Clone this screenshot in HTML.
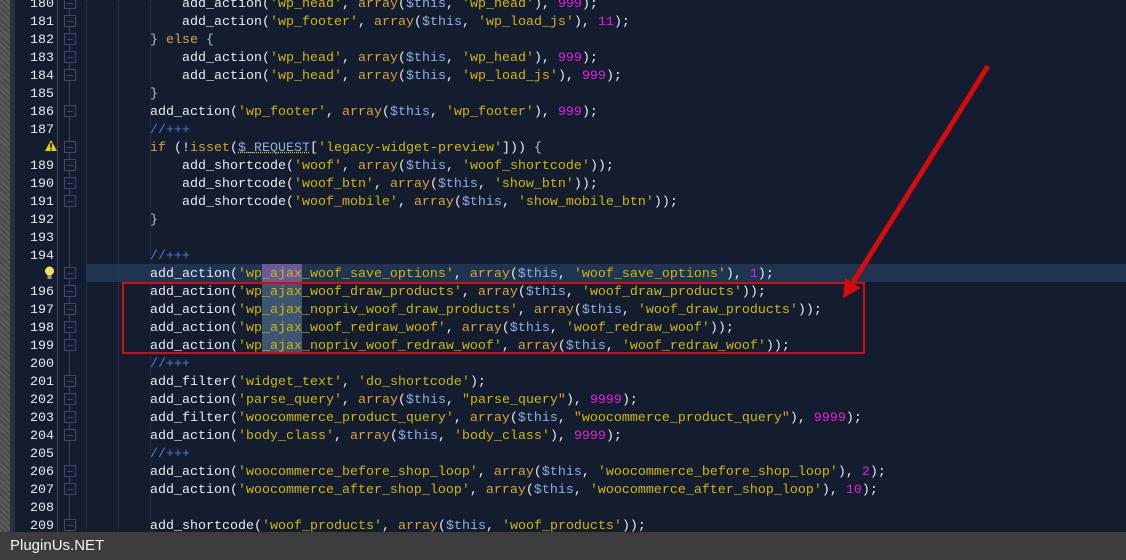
<!DOCTYPE html>
<html><head><meta charset="utf-8"><style>
html,body{margin:0;padding:0}
body{width:1126px;height:560px;overflow:hidden;background:#131d2f;position:relative;font-family:"Liberation Mono",monospace}
.strip{position:absolute;left:0;top:0;width:10px;height:532px;background:repeating-linear-gradient(45deg,#5c5c5c 0 2px,#4a4a4a 2px 4px)}
.strip2{position:absolute;left:10px;top:0;width:5px;height:532px;background:#2a2f3a}
.sep{position:absolute;left:57px;top:0;width:1px;height:532px;background:#3a4558}
.vl{position:absolute;left:69px;top:0;width:1px;height:532px;background:#34435e}
.guide{position:absolute;top:0;height:532px;width:0;border-left:1px dotted #2c3a52}
.cur{position:absolute;left:86px;top:264px;width:1040px;height:18px;background:#1e3450}
.sel{position:absolute;left:262px;width:40px;height:18px;background:#3d5570}
.box{position:absolute;left:122px;top:282px;width:739px;height:68px;border:2px solid #d40c0c}
.nums{position:absolute;left:0;top:-4px;width:54px;text-align:right;color:#e8ecf2;font-size:13.33px;line-height:18px;white-space:pre}
.fold{position:absolute;left:64px;width:10px;height:10px;border:1px solid #3b4b66;background:#131d2f}
.fold:after{content:"";position:absolute;left:2px;top:5px;width:6px;height:1px;background:#3b4b66}
.code{position:absolute;left:86px;top:-4px;color:#e8ecf2;font-size:13.33px;line-height:18px;white-space:pre}
.s{color:#d0b800}.k{color:#dca232}.n{color:#e81ee0}.v{color:#8fb0e0}.c{color:#4d7fd8}.b{color:#a8c0e0}
.foot{position:absolute;left:0;top:532px;width:1126px;height:28px;background:#3c3c3c;color:#f2f2f2;font-family:"Liberation Sans",sans-serif;font-size:15px;line-height:28px;padding-left:10px;box-sizing:border-box}
</style></head><body>
<div class="strip"></div><div class="strip2"></div>
<div class="cur"></div>
<div class="sel" style="top:264px;background:#6a5a9a"></div>
<div class="sel" style="top:282px"></div><div class="sel" style="top:300px"></div><div class="sel" style="top:318px"></div><div class="sel" style="top:336px"></div>
<div class="sep"></div><div class="vl"></div>
<div class="guide" style="left:86px"></div><div class="guide" style="left:118px"></div><div class="guide" style="left:150px"></div>
<div class="nums">180
181
182
183
184
185
186
187

189
190
191
192
193
194

196
197
198
199
200
201
202
203
204
205
206
207
208
209</div>
<svg style="position:absolute;left:45px;top:140px" width="12" height="11"><polygon points="6,0 12,11 0,11" fill="#e8d000"/><rect x="5.3" y="3" width="1.5" height="5" fill="#000"/><rect x="5.3" y="9" width="1.5" height="1.3" fill="#000"/></svg>
<svg style="position:absolute;left:44px;top:266px" width="11" height="14"><circle cx="5.5" cy="5" r="4.5" fill="#f0e060"/><rect x="3.5" y="9" width="4" height="4" fill="#999"/></svg>
<div class="fold" style="top:-3px"></div><div class="fold" style="top:15px"></div><div class="fold" style="top:33px"></div><div class="fold" style="top:51px"></div><div class="fold" style="top:69px"></div><div class="fold" style="top:105px"></div><div class="fold" style="top:141px"></div><div class="fold" style="top:159px"></div><div class="fold" style="top:177px"></div><div class="fold" style="top:195px"></div><div class="fold" style="top:267px"></div><div class="fold" style="top:285px"></div><div class="fold" style="top:303px"></div><div class="fold" style="top:321px"></div><div class="fold" style="top:339px"></div><div class="fold" style="top:375px"></div><div class="fold" style="top:393px"></div><div class="fold" style="top:411px"></div><div class="fold" style="top:429px"></div><div class="fold" style="top:465px"></div><div class="fold" style="top:483px"></div><div class="fold" style="top:519px"></div>
<div class="code">            add_action(<span class="s">'wp_head'</span>, <span class="k">array</span>(<span class="v">$this</span>, <span class="s">'wp_head'</span>), <span class="n">999</span>);
            add_action(<span class="s">'wp_footer'</span>, <span class="k">array</span>(<span class="v">$this</span>, <span class="s">'wp_load_js'</span>), <span class="n">11</span>);
        <span class="b">}</span> <span class="k">else</span> <span class="b">{</span>
            add_action(<span class="s">'wp_head'</span>, <span class="k">array</span>(<span class="v">$this</span>, <span class="s">'wp_head'</span>), <span class="n">999</span>);
            add_action(<span class="s">'wp_head'</span>, <span class="k">array</span>(<span class="v">$this</span>, <span class="s">'wp_load_js'</span>), <span class="n">999</span>);
        <span class="b">}</span>
        add_action(<span class="s">'wp_footer'</span>, <span class="k">array</span>(<span class="v">$this</span>, <span class="s">'wp_footer'</span>), <span class="n">999</span>);
        <span class="c">//+++</span>
        <span class="k">if</span> (!<span class="k">isset</span>(<span class="v" style="text-decoration:underline dotted #e8d000">$_REQUEST</span>[<span class="s">'legacy-widget-preview'</span>])) <span class="b">{</span>
            add_shortcode(<span class="s">'woof'</span>, <span class="k">array</span>(<span class="v">$this</span>, <span class="s">'woof_shortcode'</span>));
            add_shortcode(<span class="s">'woof_btn'</span>, <span class="k">array</span>(<span class="v">$this</span>, <span class="s">'show_btn'</span>));
            add_shortcode(<span class="s">'woof_mobile'</span>, <span class="k">array</span>(<span class="v">$this</span>, <span class="s">'show_mobile_btn'</span>));
        <span class="b">}</span>

        <span class="c">//+++</span>
        add_action(<span class="s">'wp_ajax_woof_save_options'</span>, <span class="k">array</span>(<span class="v">$this</span>, <span class="s">'woof_save_options'</span>), <span class="n">1</span>);
        add_action(<span class="s">'wp_ajax_woof_draw_products'</span>, <span class="k">array</span>(<span class="v">$this</span>, <span class="s">'woof_draw_products'</span>));
        add_action(<span class="s">'wp_ajax_nopriv_woof_draw_products'</span>, <span class="k">array</span>(<span class="v">$this</span>, <span class="s">'woof_draw_products'</span>));
        add_action(<span class="s">'wp_ajax_woof_redraw_woof'</span>, <span class="k">array</span>(<span class="v">$this</span>, <span class="s">'woof_redraw_woof'</span>));
        add_action(<span class="s">'wp_ajax_nopriv_woof_redraw_woof'</span>, <span class="k">array</span>(<span class="v">$this</span>, <span class="s">'woof_redraw_woof'</span>));
        <span class="c">//+++</span>
        add_filter(<span class="s">'widget_text'</span>, <span class="s">'do_shortcode'</span>);
        add_action(<span class="s">'parse_query'</span>, <span class="k">array</span>(<span class="v">$this</span>, <span class="s">"parse_query"</span>), <span class="n">9999</span>);
        add_filter(<span class="s">'woocommerce_product_query'</span>, <span class="k">array</span>(<span class="v">$this</span>, <span class="s">"woocommerce_product_query"</span>), <span class="n">9999</span>);
        add_action(<span class="s">'body_class'</span>, <span class="k">array</span>(<span class="v">$this</span>, <span class="s">'body_class'</span>), <span class="n">9999</span>);
        <span class="c">//+++</span>
        add_action(<span class="s">'woocommerce_before_shop_loop'</span>, <span class="k">array</span>(<span class="v">$this</span>, <span class="s">'woocommerce_before_shop_loop'</span>), <span class="n">2</span>);
        add_action(<span class="s">'woocommerce_after_shop_loop'</span>, <span class="k">array</span>(<span class="v">$this</span>, <span class="s">'woocommerce_after_shop_loop'</span>), <span class="n">10</span>);

        add_shortcode(<span class="s">'woof_products'</span>, <span class="k">array</span>(<span class="v">$this</span>, <span class="s">'woof_products'</span>));</div>
<div class="box"></div>
<svg style="position:absolute;left:0;top:0" width="1126" height="560"><line x1="988" y1="66" x2="852" y2="284" stroke="#d40c0c" stroke-width="5"/><polygon points="843,298 845,278 861,288" fill="#d40c0c"/></svg>
<div class="foot">PluginUs.NET</div>
</body></html>
